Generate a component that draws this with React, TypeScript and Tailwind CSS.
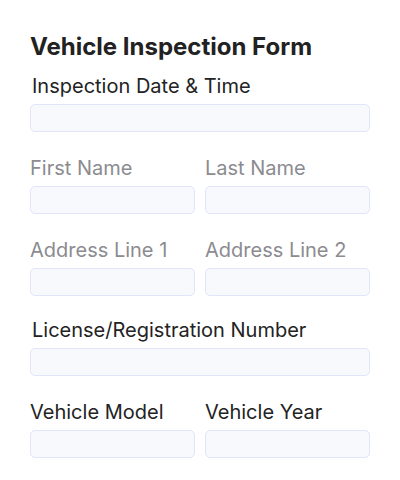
import React from 'react';

interface FieldProps {
    label: string;
    muted?: boolean;
    inset?: boolean;
}

const Field: React.FC<FieldProps> = ({ label, muted, inset }) => (
    <label className="flex flex-col min-w-0">
        <span
            className={`text-[20px] leading-[24px] whitespace-nowrap ${inset ? 'pl-[2px]' : ''} ${muted ? 'text-[#8b8b90]' : 'text-[#232323]'}`}
        >
            {label}
        </span>
        <input
            type="text"
            className="mt-[6px] h-[28px] w-full rounded-[5px] border border-[#e1e5fb] bg-[#f8f9fc] px-2 text-sm outline-none"
        />
    </label>
);

const App: React.FC = () => {
    return (
        <div className="w-[400px] h-[480px] bg-white px-[30px] pt-[31px] font-['Inter',sans-serif]">
            <h1 className="text-[24px] leading-[32px] font-bold text-[#222222]">Vehicle Inspection Form</h1>
            <div className="mt-[11px] flex flex-col">
                <Field label="Inspection Date & Time" inset />
                <div className="mt-[24px] grid grid-cols-2 gap-[10px]">
                    <Field label="First Name" muted />
                    <Field label="Last Name" muted />
                </div>
                <div className="mt-[24px] grid grid-cols-2 gap-[10px]">
                    <Field label="Address Line 1" muted />
                    <Field label="Address Line 2" muted />
                </div>
                <div className="mt-[22px]">
                    <Field label="License/Registration Number" inset />
                </div>
                <div className="mt-[24px] grid grid-cols-2 gap-[10px]">
                    <Field label="Vehicle Model" />
                    <Field label="Vehicle Year" />
                </div>
            </div>
        </div>
    );
};

export default App;
